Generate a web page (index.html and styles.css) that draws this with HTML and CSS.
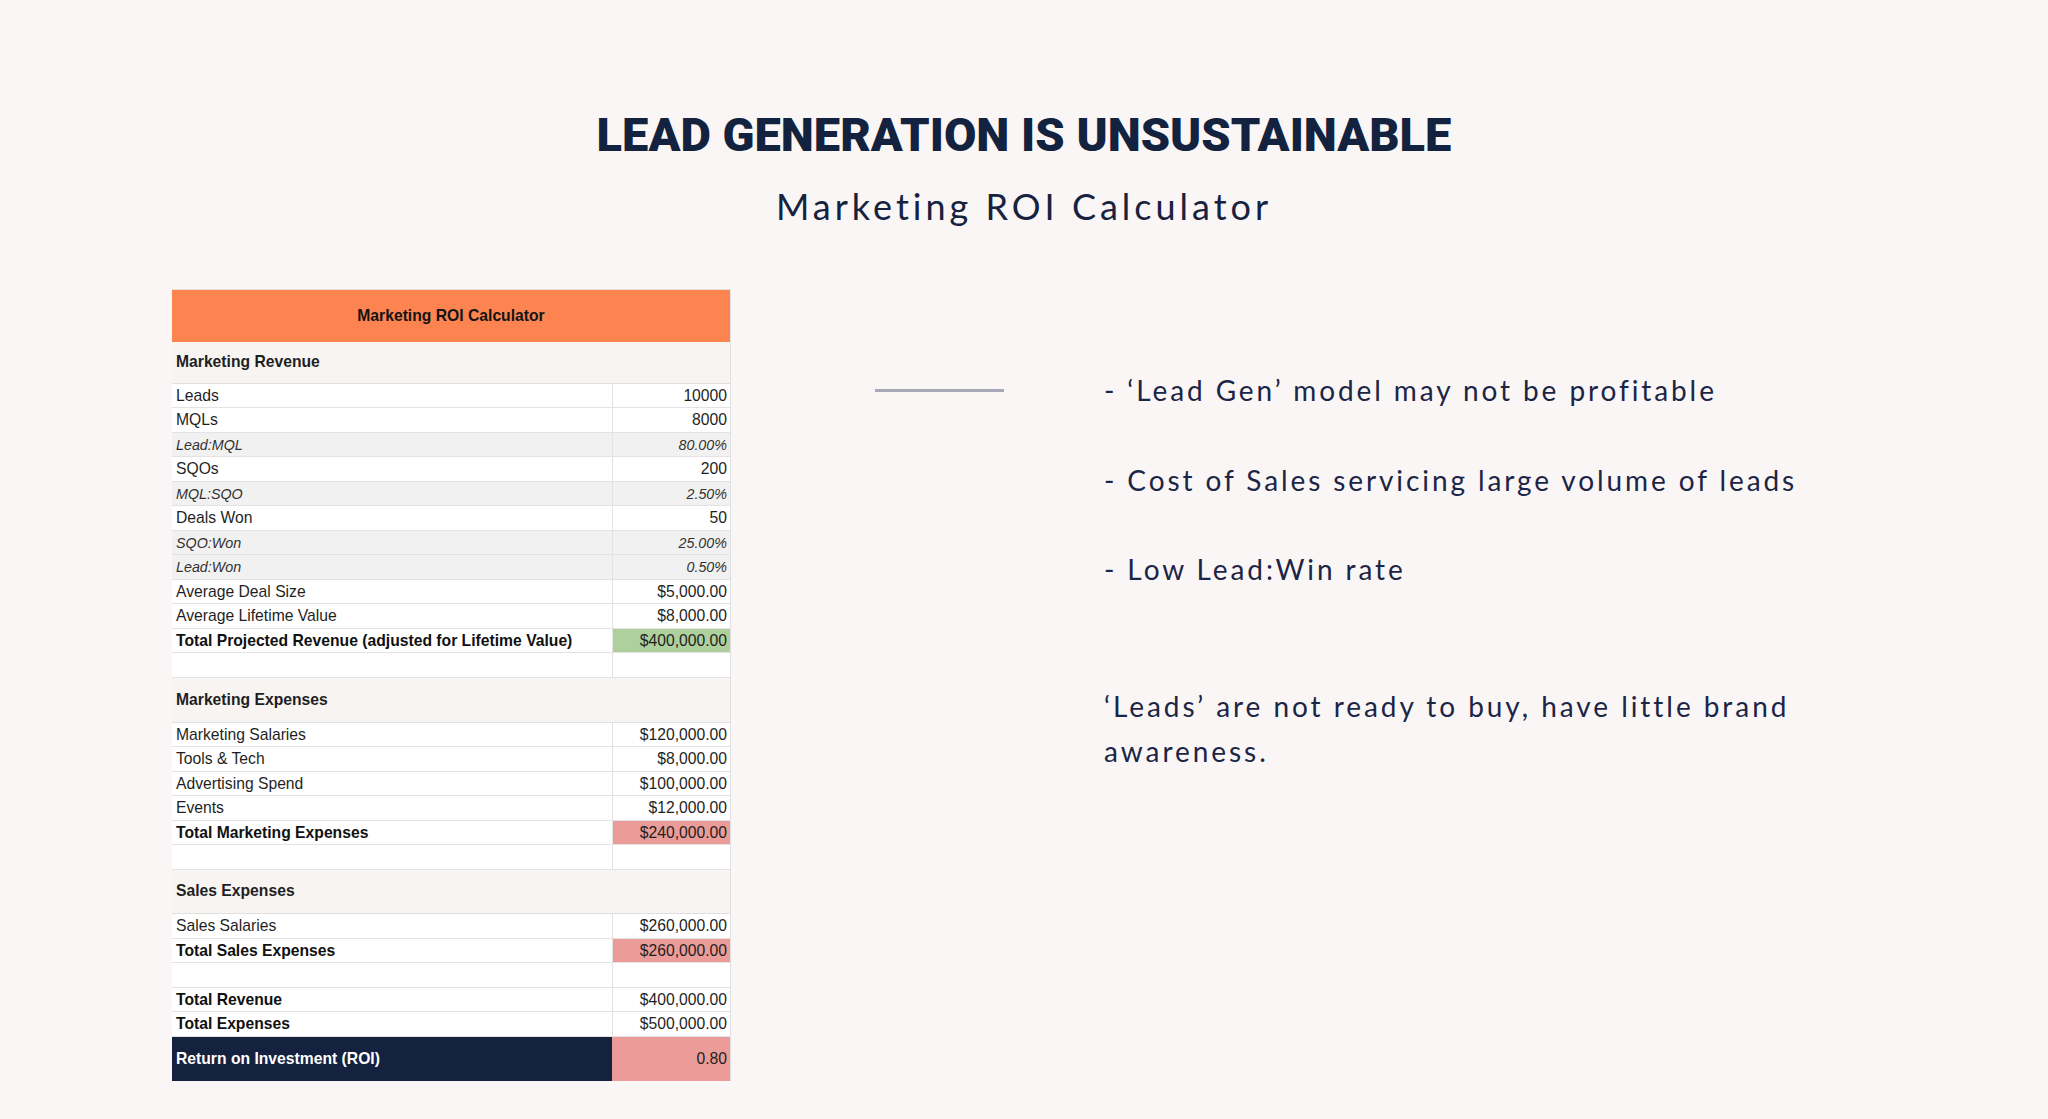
FILE: index.html
```html
<!DOCTYPE html>
<html lang="en">
<head>
<meta charset="utf-8">
<title>Lead Generation is Unsustainable</title>
<link rel="stylesheet" href="styles.css">
</head>
<body>
<header class="hero">
  <h1 class="hero-title">LEAD GENERATION IS UNSUSTAINABLE</h1>
  <p class="hero-subtitle">Marketing ROI Calculator</p>
</header>
<main class="content">
  <section class="sheet">
    <div class="sheet-head">Marketing ROI Calculator</div>
    <div class="sheet-section sheet-section--first">Marketing Revenue</div>
    <div class="row"><span class="label">Leads</span><span class="value">10000</span></div>
    <div class="row"><span class="label">MQLs</span><span class="value">8000</span></div>
    <div class="row row--ratio"><span class="label">Lead:MQL</span><span class="value">80.00%</span></div>
    <div class="row"><span class="label">SQOs</span><span class="value">200</span></div>
    <div class="row row--ratio"><span class="label">MQL:SQO</span><span class="value">2.50%</span></div>
    <div class="row"><span class="label">Deals Won</span><span class="value">50</span></div>
    <div class="row row--ratio"><span class="label">SQO:Won</span><span class="value">25.00%</span></div>
    <div class="row row--ratio"><span class="label">Lead:Won</span><span class="value">0.50%</span></div>
    <div class="row"><span class="label">Average Deal Size</span><span class="value">$5,000.00</span></div>
    <div class="row"><span class="label">Average Lifetime Value</span><span class="value">$8,000.00</span></div>
    <div class="row row--total"><span class="label">Total Projected Revenue (adjusted for Lifetime Value)</span><span class="value value--green">$400,000.00</span></div>
    <div class="row"><span class="label"></span><span class="value"></span></div>

    <div class="sheet-section">Marketing Expenses</div>
    <div class="row"><span class="label">Marketing Salaries</span><span class="value">$120,000.00</span></div>
    <div class="row"><span class="label">Tools &amp; Tech</span><span class="value">$8,000.00</span></div>
    <div class="row"><span class="label">Advertising Spend</span><span class="value">$100,000.00</span></div>
    <div class="row"><span class="label">Events</span><span class="value">$12,000.00</span></div>
    <div class="row row--total"><span class="label">Total Marketing Expenses</span><span class="value value--red">$240,000.00</span></div>
    <div class="row"><span class="label"></span><span class="value"></span></div>

    <div class="sheet-section sheet-section--short">Sales Expenses</div>
    <div class="row"><span class="label">Sales Salaries</span><span class="value">$260,000.00</span></div>
    <div class="row row--total"><span class="label">Total Sales Expenses</span><span class="value value--red">$260,000.00</span></div>
    <div class="row"><span class="label"></span><span class="value"></span></div>
    <div class="row row--total"><span class="label">Total Revenue</span><span class="value">$400,000.00</span></div>
    <div class="row row--total"><span class="label">Total Expenses</span><span class="value">$500,000.00</span></div>
    <div class="row row--roi"><span class="label">Return on Investment (ROI)</span><span class="value value--red">0.80</span></div>
  </section>

  <section class="notes">
    <div class="note-list">
      <div class="note note--lead"><span class="note-rule"></span><span class="note-text">- ‘Lead Gen’ model may not be profitable</span></div>
      <div class="note"><span class="note-text">- Cost of Sales servicing large volume of leads</span></div>
      <div class="note"><span class="note-text">- Low Lead:Win rate</span></div>
    </div>
    <p class="note-para">‘Leads’ are not ready to buy, have little brand awareness.</p>
  </section>
</main>
</body>
</html>
```

FILE: styles.css
```css
html, body {
  margin: 0;
  padding: 0;
}

body {
  background: #f9f6f5;
  min-height: 100vh;
  color: #1c2546;
  font-family: "Lato", "Open Sans", sans-serif;
}

.hero {
  padding-top: 107px;
  text-align: center;
}

.hero-title {
  margin: 0;
  font-family: "Roboto", "Liberation Sans", sans-serif;
  font-weight: 900;
  font-size: 47px;
  line-height: 56px;
  color: #13233f;
  letter-spacing: 0;
}

.hero-subtitle {
  margin: 22px 0 0;
  font-family: "Lato", "Open Sans", sans-serif;
  font-weight: 400;
  font-size: 36px;
  line-height: 42px;
  letter-spacing: 4px;
  color: #16223f;
}

.content {
  display: flex;
  align-items: flex-start;
  margin-top: 62px;
  padding-left: 172px;
}

/* Spreadsheet */
.sheet {
  width: 559px;
  flex: none;
  font-family: "Liberation Sans", Arial, sans-serif;
  font-size: 15.7px;
  color: #1f1f1f;
  border-right: 1px solid #e2e0df;
  box-sizing: border-box;
}

.sheet-head {
  height: 53px;
  display: flex;
  align-items: center;
  justify-content: center;
  background: #fd8450;
  border-top: 1px solid #e6e0dc;
  box-sizing: border-box;
  font-weight: 700;
  color: #141414;
}

.sheet-section {
  height: 45px;
  display: flex;
  align-items: center;
  padding-left: 4px;
  background: #f7f4f2;
  border-bottom: 1px solid #e2e0df;
  box-sizing: border-box;
  font-weight: 700;
}

.sheet-section--first {
  height: 41.5px;
}

.sheet-section--short {
  height: 44.5px;
}

.row {
  display: grid;
  grid-template-columns: 440px 1fr;
  height: 24.5px;
  background: #ffffff;
  border-bottom: 1px solid #e4e2e2;
  box-sizing: border-box;
}

.label,
.value {
  display: flex;
  align-items: center;
  white-space: nowrap;
  overflow: hidden;
  padding-top: 1px;
}

.label {
  padding-left: 4px;
}

.value {
  justify-content: flex-end;
  padding-right: 3px;
  border-left: 1px solid #e4e2e2;
}

.row--ratio {
  background: #f2f1f2;
  font-style: italic;
  font-size: 14.3px;
  color: #333333;
}

.row--total .label {
  font-weight: 700;
  color: #111111;
}

.value--green {
  background: #aed09d;
}

.value--red {
  background: #eb9c98;
}

.row--roi {
  height: 44.5px;
  border-bottom: none;
}

.row--roi .label {
  background: #14223f;
  color: #ffffff;
  font-weight: 700;
}

.row--roi .value {
  border-left: none;
}

/* Notes column */
.notes {
  margin-left: 144px;
  padding-top: 79px;
  font-family: "Lato", "Open Sans", sans-serif;
  color: #1c2546;
}

.note-list {
  display: flex;
  flex-direction: column;
  gap: 44.7px;
}

.note {
  display: flex;
  align-items: center;
  padding-left: 229px;
  font-size: 28px;
  line-height: 45px;
  letter-spacing: 2.9px;
  white-space: nowrap;
}

.note--lead {
  padding-left: 0;
}

.note-rule {
  width: 129px;
  height: 3px;
  margin-right: 100px;
  background: #a7a8b7;
  flex: none;
}

.note-para {
  margin: 92px 0 0 229px;
  max-width: 740px;
  font-size: 28px;
  line-height: 45px;
  letter-spacing: 2.95px;
}
```
